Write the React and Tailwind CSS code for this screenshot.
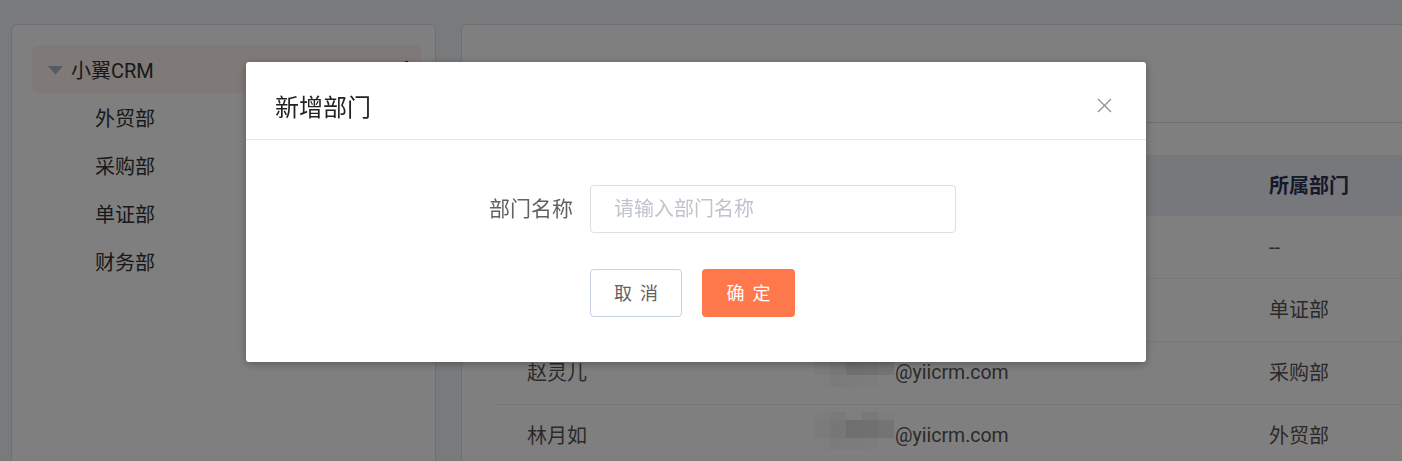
import React from 'react';

const FONT = { fontFamily: 'Roboto, "Noto Sans CJK SC", sans-serif' };

const departments = ['外贸部', '采购部', '单证部', '财务部'];

const rows = [
  { name: '管理员', dept: '--' },
  { name: '李逍遥', dept: '单证部' },
  { name: '赵灵儿', dept: '采购部' },
  { name: '林月如', dept: '外贸部' },
];

// pixelated blur over the local part of each email address
const Mosaic = () => (
  <div className="flex flex-col mr-[1px] -mt-[10px]">
    <div className="flex">
      <div className="w-[16px] h-[8px] bg-[#fbfbfb]" />
      <div className="w-[16px] h-[8px] bg-[#f4f4f4]" />
      <div className="w-[16px] h-[8px] bg-[#fdfdfd]" />
      <div className="w-[16px] h-[8px] bg-[#f2f2f2]" />
      <div className="w-[16px] h-[8px] bg-[#fafafa]" />
    </div>
    <div className="flex">
      <div className="w-[16px] h-[18px] bg-[#f6f6f6]" />
      <div className="w-[16px] h-[18px] bg-[#eeeeee]" />
      <div className="w-[16px] h-[18px] bg-[#dedede]" />
      <div className="w-[16px] h-[18px] bg-[#e0e0e0]" />
      <div className="w-[16px] h-[18px] bg-[#e8e8e8]" />
    </div>
    <div className="flex">
      <div className="w-[16px] h-[12px] bg-[#fcfcfc]" />
      <div className="w-[16px] h-[12px] bg-[#f7f7f7]" />
      <div className="w-[16px] h-[12px] bg-[#f9f9f9]" />
      <div className="w-[16px] h-[12px] bg-[#fbfbfb]" />
      <div className="w-[16px] h-[12px] bg-white" />
    </div>
  </div>
);

const TreePanel = () => (
  <div className="w-[425px] shrink-0 h-[460px] bg-white border border-[#dcdfe6] rounded-[6px] pt-[20px] pl-[20px] pr-[14px]">
    <div className="h-[48px] rounded-[6px] bg-[#fff3f0] flex items-center pl-[16px] pr-[13px] pt-[3px]">
      <svg width="15" height="9" viewBox="0 0 15 9" className="mr-[8px]">
        <path d="M0 0 H15 L7.5 8.5 Z" fill="#aab6cc" />
      </svg>
      <span className="text-[20px] leading-[24px] text-[#333]">小翼CRM</span>
      <div className="ml-auto -mt-[3px] flex flex-col items-center gap-[4px]">
        <span className="w-[3px] h-[3px] bg-[#3a3a3a]" />
        <span className="w-[3px] h-[3px] bg-[#3a3a3a]" />
        <span className="w-[3px] h-[3px] bg-[#3a3a3a]" />
      </div>
    </div>
    {departments.map((d) => (
      <div key={d} className="h-[48px] flex items-center pl-[63px] pt-[3px] text-[20px] leading-[24px] text-[#333]">
        {d}
      </div>
    ))}
  </div>
);

const UserTable = () => (
  <div className="w-[980px] shrink-0 h-[460px] bg-white border border-[#dcdfe6] rounded-[6px]">
    <div className="h-[98px] border-b border-[#dcdfe6]" />
    <div className="px-[31px] pt-[32px]">
      <div className="h-[61px] bg-[#eef0f6] flex items-center text-[20px] font-bold text-[#2c3157]">
        <div className="w-[307px] pl-[34px]">姓名</div>
        <div className="w-[435px] pl-[34px]">邮箱</div>
        <div className="pl-[34px]">所属部门</div>
      </div>
      {rows.map((r) => (
        <div key={r.name} className="h-[63px] border-b border-[#ebeef5] flex items-center text-[20px] text-[#555]">
          <div className="w-[307px] pl-[34px] -mt-[1px]">{r.name}</div>
          <div className="w-[435px] pl-[14px] flex items-center">
            <Mosaic />
            <span className="text-[19.5px] -mt-[1px]">@yiicrm.com</span>
          </div>
          <div className="pl-[34px] -mt-[1px]">{r.dept}</div>
        </div>
      ))}
    </div>
  </div>
);

const AddDeptDialog = () => (
  <div className="fixed inset-0 bg-black/50 pl-[246px] pt-[62px]">
    <div className="w-[900px] h-[300px] bg-white rounded-[3px] shadow-[0_2px_8px_rgba(0,0,0,0.3)]">
      <div className="h-[78px] border-b border-[#e4e7ed] flex items-center justify-between pl-[29px] pr-[34px]">
        <span className="text-[24px] leading-[30px] text-[#222] pt-[14px]">新增部门</span>
        <svg width="15" height="15" viewBox="0 0 15 15" className="mt-[10px]">
          <path d="M1 1 L14 14 M14 1 L1 14" stroke="#909399" strokeWidth="1.4" />
        </svg>
      </div>
      <div className="pt-[45px]">
        <div className="flex items-center">
          <label className="w-[344px] pr-[17px] text-right text-[21px] leading-[24px] text-[#606266]">部门名称</label>
          <input
            placeholder="请输入部门名称"
            className="w-[366px] h-[48px] border border-[#dcdfe6] rounded-[4px] px-[23px] text-[20px] text-[#606266] placeholder:text-[#c0c4cc] outline-none"
            style={FONT}
          />
        </div>
        <div className="flex gap-[20px] ml-[344px] mt-[36px]">
          <button className="w-[92px] h-[48px] border border-[#c9d2e2] rounded-[4px] bg-white text-[18px] text-[#606266] tracking-[8px] pl-[8px]">
            取消
          </button>
          <button className="w-[93px] h-[48px] rounded-[4px] bg-[#ff784c] text-[18px] text-white tracking-[8px] pl-[8px]">
            确定
          </button>
        </div>
      </div>
    </div>
  </div>
);

export default function App() {
  return (
    <div className="relative h-[461px] overflow-hidden bg-[#f3f4f8]" style={FONT}>
      <div className="flex gap-[25px] pl-[11px] pt-[24px]">
        <TreePanel />
        <UserTable />
      </div>
      <AddDeptDialog />
    </div>
  );
}
